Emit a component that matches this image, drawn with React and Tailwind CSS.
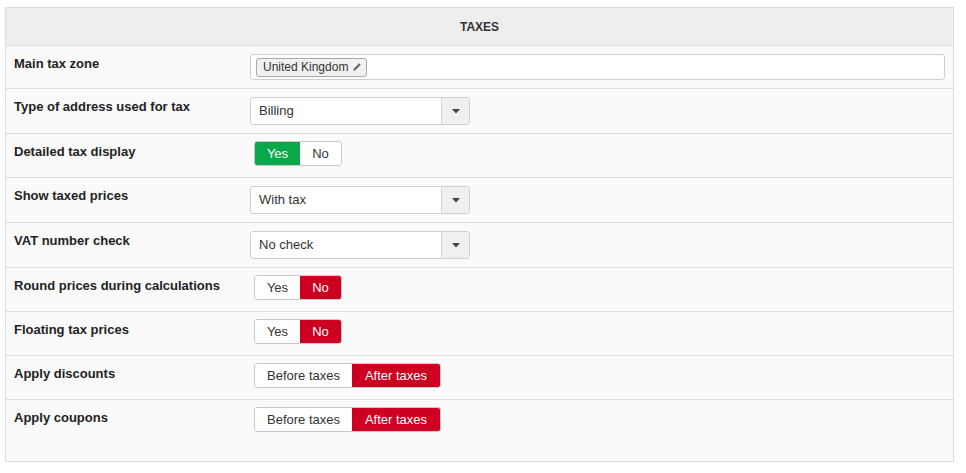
import React from "react";

const font = { fontFamily: '"Liberation Sans", Arial, Helvetica, sans-serif' };

function Toggle({ options, active, color, widths }) {
  return (
    <div className="flex h-[27px] items-start pl-1">
      <div className="-mt-px flex h-[25px] overflow-hidden rounded-[3px] border border-[#c8c8c8] text-[13px]">
        {options.map((o, i) => {
          const on = i === active;
          return (
            <div
              key={o}
              className={
                "flex items-center justify-center " +
                (on
                  ? color === "green"
                    ? "bg-[#0aa84a] text-white"
                    : "bg-[#cc0020] text-white"
                  : "bg-white text-[#333]")
              }
              style={{ width: widths[i] }}
            >
              {o}
            </div>
          );
        })}
      </div>
    </div>
  );
}

function Select({ value }) {
  return (
    <div className="flex h-[28px] w-[220px] overflow-hidden rounded-[3px] border border-[#cfcfcf] bg-white">
      <div className="flex flex-1 items-center pl-2 text-[13px] text-[#333]">{value}</div>
      <div className="flex w-[28px] items-center justify-center border-l border-[#d5d5d5] bg-[#f0f0f0]">
        <svg width="8" height="5" viewBox="0 0 8 5">
          <path d="M0 0 L8 0 L4 4.5 Z" fill="#444" />
        </svg>
      </div>
    </div>
  );
}

function Row({ label, children, last }) {
  return (
    <div className={"flex border-t border-[#dddddd] pt-2 " + (last ? "pb-[26px]" : "pb-2")}>
      <div className="w-[236px] shrink-0 px-2 pt-px text-[13px] font-bold leading-[18px] text-[#222]">
        {label}
      </div>
      <div className="flex-1 px-2">{children}</div>
    </div>
  );
}

export default function App() {
  return (
    <div className="min-h-[473px] bg-white pl-[5px] pt-[7px]" style={font}>
      <div className="w-[949px] border border-[#dddddd] bg-[#fafafa]">
        <div className="flex h-[37px] items-center justify-center bg-[#eeeeee] text-[12px] font-bold text-[#333]">
          TAXES
        </div>
        <Row label="Main tax zone">
          <div className="flex h-[26px] items-center rounded-[3px] border border-[#cfcfcf] bg-white pl-[5px]">
            <div className="flex h-[19px] items-center gap-[4px] rounded-[3px] border border-[#aaaaaa] bg-[#f1f1f1] pl-[6px] pr-[4px] text-[12px] text-[#333]">
              <span>United Kingdom</span>
              <svg width="10" height="10" viewBox="0 0 10 10">
                <path d="M7.2 1.2 L8.8 2.8 L3.3 8.3 L1.2 8.8 L1.7 6.7 Z" fill="#666" />
              </svg>
            </div>
          </div>
        </Row>
        <Row label="Type of address used for tax">
          <Select value="Billing" />
        </Row>
        <Row label="Detailed tax display">
          <Toggle options={["Yes", "No"]} active={0} color="green" widths={[45, 41]} />
        </Row>
        <Row label="Show taxed prices">
          <Select value="With tax" />
        </Row>
        <Row label="VAT number check">
          <Select value="No check" />
        </Row>
        <Row label="Round prices during calculations">
          <Toggle options={["Yes", "No"]} active={1} color="red" widths={[45, 41]} />
        </Row>
        <Row label="Floating tax prices">
          <Toggle options={["Yes", "No"]} active={1} color="red" widths={[45, 41]} />
        </Row>
        <Row label="Apply discounts">
          <Toggle options={["Before taxes", "After taxes"]} active={1} color="red" widths={[97, 88]} />
        </Row>
        <Row label="Apply coupons" last>
          <Toggle options={["Before taxes", "After taxes"]} active={1} color="red" widths={[97, 88]} />
        </Row>
      </div>
    </div>
  );
}
